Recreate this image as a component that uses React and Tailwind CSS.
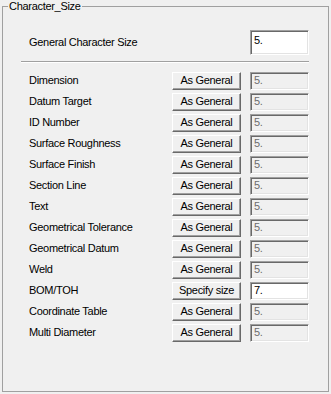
const rows = [
  ["Dimension", "As General", "5.", false],
  ["Datum Target", "As General", "5.", false],
  ["ID Number", "As General", "5.", false],
  ["Surface Roughness", "As General", "5.", false],
  ["Surface Finish", "As General", "5.", false],
  ["Section Line", "As General", "5.", false],
  ["Text", "As General", "5.", false],
  ["Geometrical Tolerance", "As General", "5.", false],
  ["Geometrical Datum", "As General", "5.", false],
  ["Weld", "As General", "5.", false],
  ["BOM/TOH", "Specify size", "7.", true],
  ["Coordinate Table", "As General", "5.", false],
  ["Multi Diameter", "As General", "5.", false],
];

function SunkenBox({ value, enabled, tall }) {
  return (
    <div
      className={
        "w-[59px] border border-t-[#a0a0a0] border-l-[#a0a0a0] border-b-white border-r-white shadow-[inset_1px_1px_0_#696969,inset_-1px_-1px_0_#e3e3e3] pl-[3px] " +
        (tall ? "h-[25px] pt-[3px] " : "h-[18px] pt-[1px] ") +
        (enabled ? "bg-white text-black" : "bg-[#f0f0f0] text-[#6d6d6d]")
      }
    >
      {value}
    </div>
  );
}

export default function App() {
  return (
    <div className="w-[331px] h-[394px] bg-[#f0f0f0] px-[2px] pb-[2px] text-[11px] leading-[13px] tracking-[-0.3px] text-black font-['Liberation_Sans',Arial,sans-serif]">
      <fieldset className="h-[392px] border border-[#a0a0a0]">
        <legend className="ml-[5px] px-[1px]">Character_Size</legend>

        <div className="flex items-center h-[25px] mt-[17px] ml-[26px]">
          <span className="w-[221px]">General Character Size</span>
          <SunkenBox value="5." enabled tall />
        </div>

        <div className="ml-[18px] mt-[6px] w-[288px] h-[2px] border-t border-[#a0a0a0] border-b border-b-white" />

        <div className="flex flex-col mt-[7px] ml-[26px]">
          {rows.map(([label, btn, val, on]) => (
            <div key={label} className="flex items-center h-[21px]">
              <span className="w-[143px]">{label}</span>
              <button className="w-[69px] h-[18px] border border-t-white border-l-white border-b-[#696969] border-r-[#696969] shadow-[inset_-1px_-1px_0_#a0a0a0] bg-[#f0f0f0] text-center">
                {btn}
              </button>
              <div className="ml-[9px]">
                <SunkenBox value={val} enabled={on} />
              </div>
            </div>
          ))}
        </div>
      </fieldset>
    </div>
  );
}
